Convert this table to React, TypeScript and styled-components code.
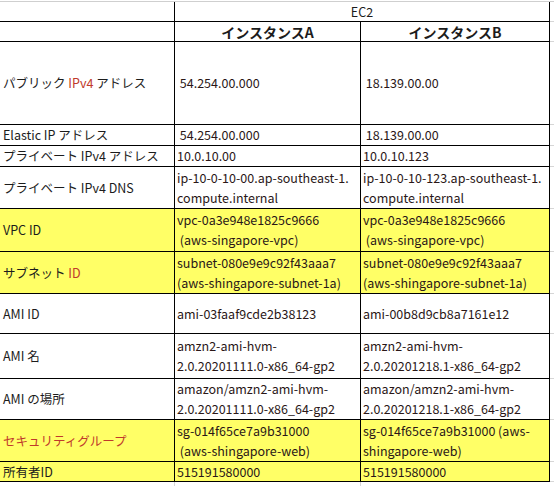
import React from "react";
import styled, { createGlobalStyle } from "styled-components";

const Global = createGlobalStyle`
  html, body { margin: 0; padding: 0; background: #fff; }
  body { font-family: "Noto Sans CJK JP", "Noto Sans", sans-serif; color: #1c1c1c; }
`;

const Sheet = styled.div<{ $rows: string }>`
  margin-top: 1px;
  border-top: 1px solid #cfcfcf;
  display: grid;
  grid-template-columns: 175px 186px 189px 1fr;
  grid-template-rows: ${(p) => p.$rows};
  width: 554px;
`;

const Cell = styled.div<{ $yellow?: boolean; $span?: number; $center?: boolean; $bold?: boolean; $pad?: number }>`
  box-sizing: border-box;
  border-right: 1px solid #000;
  border-bottom: 1px solid #000;
  background: ${(p) => (p.$yellow ? "#ffff66" : "#fff")};
  grid-column: span ${(p) => p.$span ?? 1};
  display: flex;
  align-items: center;
  justify-content: ${(p) => (p.$center ? "center" : "flex-start")};
  padding-left: ${(p) => (p.$center ? 0 : p.$pad ?? 2)}px;
  font-size: ${(p) => (p.$bold ? 14 : 12.5)}px;
  font-weight: ${(p) => (p.$bold ? 700 : 400)};
  line-height: 20px;
  white-space: pre;
  overflow: hidden;
`;

const Value = styled.span`
  color: #2a1717;
`;

const Gap = styled.div`
  box-sizing: border-box;
  border-bottom: 1px solid #d6d6d6;
`;

const Trail = styled.div<{ $line?: boolean }>`
  box-sizing: border-box;
  border-right: ${(p) => (p.$line ? "1px solid #d6d6d6" : "none")};
`;

const Accent = styled.span`
  color: #c0392b;
`;

type Row = {
  label: React.ReactNode;
  a: string;
  b: string;
  h: number;
  yellow?: boolean;
};

const rows: Row[] = [
  { label: <>パブリック <Accent>IPv4</Accent> アドレス</>, a: " 54.254.00.000", b: " 18.139.00.00", h: 83 },
  { label: "Elastic IP アドレス", a: " 54.254.00.000", b: " 18.139.00.00", h: 21 },
  { label: "プライベート IPv4 アドレス", a: "10.0.10.00", b: "10.0.10.123", h: 21 },
  {
    label: "プライベート IPv4 DNS",
    a: "ip-10-0-10-00.ap-southeast-1.\ncompute.internal",
    b: "ip-10-0-10-123.ap-southeast-1.\ncompute.internal",
    h: 42,
  },
  {
    label: "VPC ID",
    a: "vpc-0a3e948e1825c9666\n (aws-singapore-vpc)",
    b: "vpc-0a3e948e1825c9666\n (aws-singapore-vpc)",
    h: 43,
    yellow: true,
  },
  {
    label: <>サブネット <Accent>ID</Accent></>,
    a: "subnet-080e9e9c92f43aaa7\n(aws-shingapore-subnet-1a)",
    b: "subnet-080e9e9c92f43aaa7\n(aws-shingapore-subnet-1a)",
    h: 42,
    yellow: true,
  },
  { label: "AMI ID", a: "ami-03faaf9cde2b38123", b: "ami-00b8d9cb8a7161e12", h: 40 },
  {
    label: "AMI 名",
    a: "amzn2-ami-hvm-\n2.0.20201111.0-x86_64-gp2",
    b: "amzn2-ami-hvm-\n2.0.20201218.1-x86_64-gp2",
    h: 45,
  },
  {
    label: "AMI の場所",
    a: "amazon/amzn2-ami-hvm-\n2.0.20201111.0-x86_64-gp2",
    b: "amazon/amzn2-ami-hvm-\n2.0.20201218.1-x86_64-gp2",
    h: 41,
  },
  {
    label: <Accent>セキュリティグループ</Accent>,
    a: "sg-014f65ce7a9b31000\n (aws-shingapore-web)",
    b: "sg-014f65ce7a9b31000 (aws-\nshingapore-web)",
    h: 42,
    yellow: true,
  },
  { label: "所有者ID", a: "515191580000", b: "515191580000", h: 20, yellow: true },
];

export default function App() {
  const template = ["20px", "20px", ...rows.map((r) => `${r.h}px`), "10px"].join(" ");
  return (
    <>
      <Global />
      <Sheet $rows={template}>
        <Cell />
        <Cell $span={2} $center>
          EC2
        </Cell>
        <Gap />

        <Cell />
        <Cell $center $bold>
          インスタンスA
        </Cell>
        <Cell $center $bold>
          インスタンスB
        </Cell>
        <Gap />

        {rows.map((r, i) => (
          <React.Fragment key={i}>
            <Cell $yellow={r.yellow} $pad={3}>
              {r.label}
            </Cell>
            <Cell $yellow={r.yellow}>
              <Value>{r.a}</Value>
            </Cell>
            <Cell $yellow={r.yellow}>
              <Value>{r.b}</Value>
            </Cell>
            <Gap />
          </React.Fragment>
        ))}

        <Trail $line />
        <Trail $line />
        <Trail />
        <Trail />
      </Sheet>
    </>
  );
}
